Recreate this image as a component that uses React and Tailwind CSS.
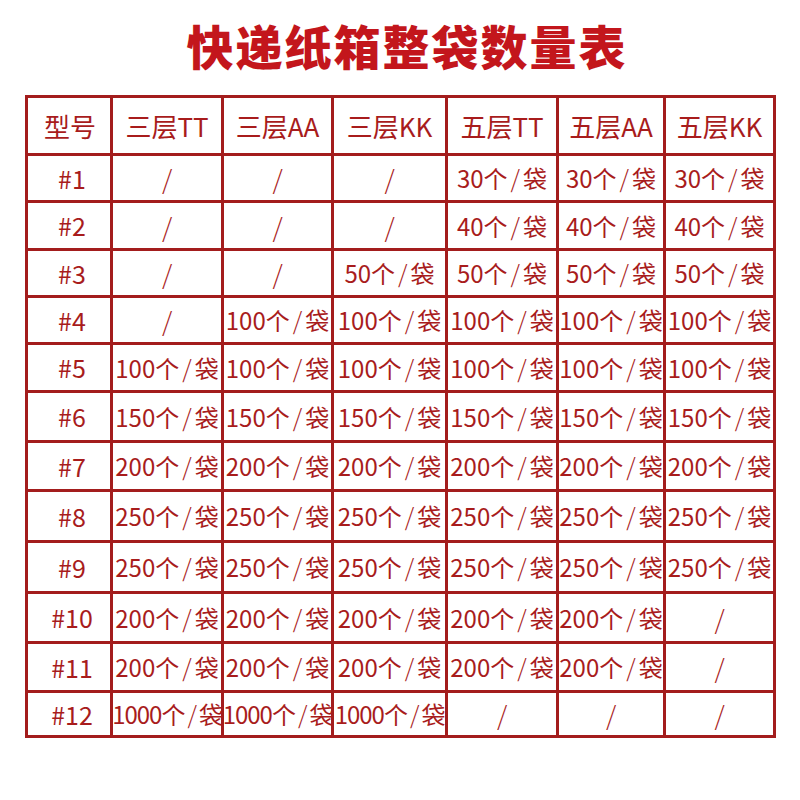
import React from "react";

const headers = ["型号", "三层TT", "三层AA", "三层KK", "五层TT", "五层AA", "五层KK"];
const S = "/";
const rows = [
  ["#1", S, S, S, "30个/袋", "30个/袋", "30个/袋"],
  ["#2", S, S, S, "40个/袋", "40个/袋", "40个/袋"],
  ["#3", S, S, "50个/袋", "50个/袋", "50个/袋", "50个/袋"],
  ["#4", S, "100个/袋", "100个/袋", "100个/袋", "100个/袋", "100个/袋"],
  ["#5", "100个/袋", "100个/袋", "100个/袋", "100个/袋", "100个/袋", "100个/袋"],
  ["#6", "150个/袋", "150个/袋", "150个/袋", "150个/袋", "150个/袋", "150个/袋"],
  ["#7", "200个/袋", "200个/袋", "200个/袋", "200个/袋", "200个/袋", "200个/袋"],
  ["#8", "250个/袋", "250个/袋", "250个/袋", "250个/袋", "250个/袋", "250个/袋"],
  ["#9", "250个/袋", "250个/袋", "250个/袋", "250个/袋", "250个/袋", "250个/袋"],
  ["#10", "200个/袋", "200个/袋", "200个/袋", "200个/袋", "200个/袋", S],
  ["#11", "200个/袋", "200个/袋", "200个/袋", "200个/袋", "200个/袋", S],
  ["#12", "1000个/袋", "1000个/袋", "1000个/袋", S, S, S],
];

const font = { fontFamily: '"Noto Sans CJK SC", "Noto Sans", sans-serif' };

function Cell({ text }) {
  if (text === "/") {
    return <span className="text-[26px] font-light">/</span>;
  }
  const [left, right] = text.split("/");
  const long = left.length > 4;
  return (
    <span className={`text-[24px] ${long ? "tracking-[-1px]" : ""}`}>
      {left}
      <span className="px-[3px] font-light">/</span>
      {right}
    </span>
  );
}

export default function App() {
  return (
    <div className="w-[800px] h-[800px] bg-white" style={font}>
      <div className="h-[95px] flex items-center justify-center pl-[14px] pb-[6px]">
        <h1 className="text-[47px] font-black text-[#c3161c] tracking-[2px] leading-none">
          快递纸箱整袋数量表
        </h1>
      </div>
      <div className="ml-[25px] w-[751px] bg-[#a31d1d] p-[3px]">
        <div className="grid grid-cols-[82px_108px_107px_111px_108px_104px_107px] grid-rows-[55px_44px_45px_44px_44px_45px_47px_46px_48px_48px_47px_46px_42px] gap-[3px]">
          {headers.map((h, i) => (
            <div
              key={"h" + i}
              className={`bg-white flex items-center justify-center text-[26px] text-[#a81c1c] leading-none whitespace-nowrap ${i === 0 ? "pl-[2px]" : ""}`}
            >
              {h}
            </div>
          ))}
          {rows.map((r, ri) =>
            r.map((c, ci) => (
              <div
                key={ri + "-" + ci}
                className={`bg-white flex items-center justify-center leading-none whitespace-nowrap overflow-visible text-[#a81c1c] ${
                  ci === 0 ? "text-[25px] pl-[6px]" : ""
                }`}
              >
                {ci === 0 ? c : <Cell text={c} />}
              </div>
            ))
          )}
        </div>
      </div>
    </div>
  );
}
